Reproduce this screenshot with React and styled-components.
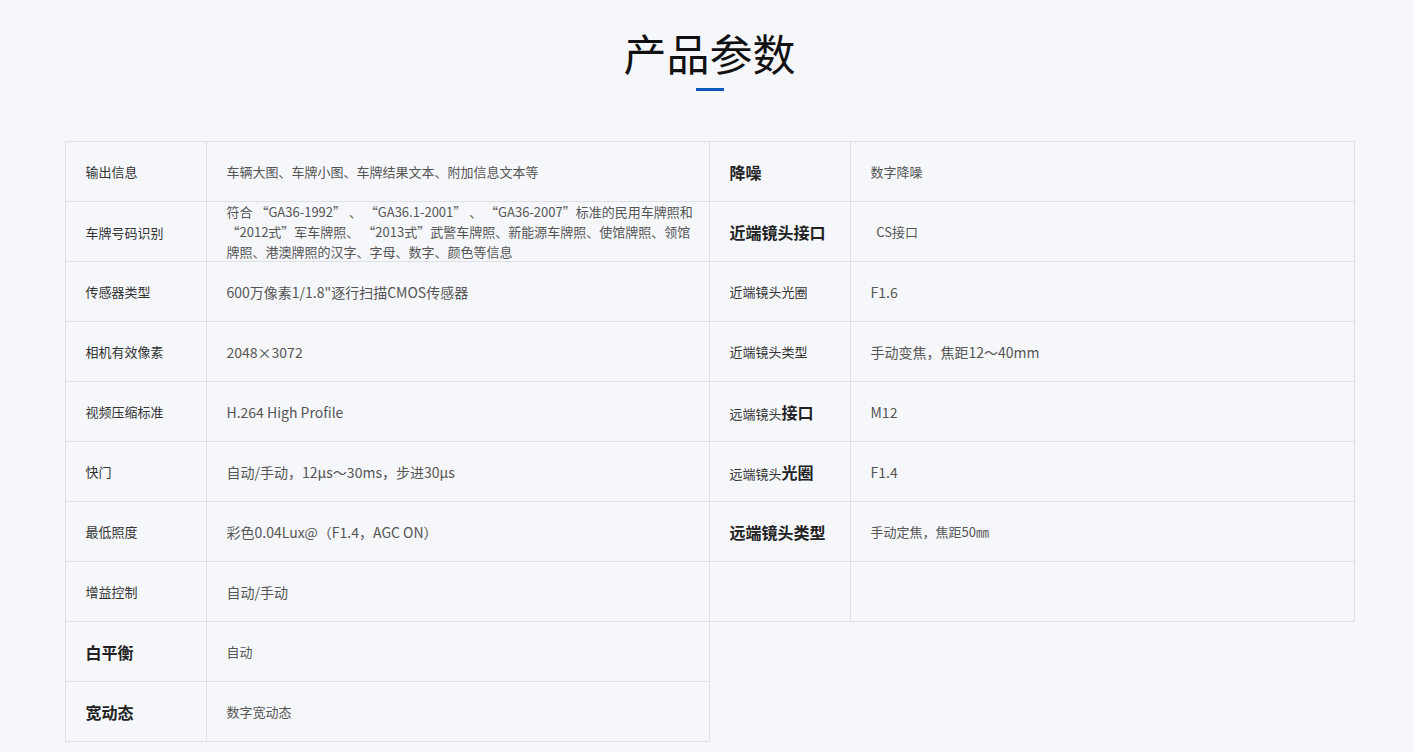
import React from "react";
import styled, { createGlobalStyle } from "styled-components";

const G = createGlobalStyle`
  body { margin:0; background:#f5f7fb; font-family:"Noto Sans CJK SC","Noto Sans",sans-serif; }
`;
const Page = styled.div`padding-top:23px; display:flex; flex-direction:column; align-items:center;`;
const Title = styled.h1`margin:0; font-size:43px; font-weight:400; color:#111; line-height:58px; margin-left:6px;`;
const Bar = styled.div`width:28px; height:3px; background:#0b56b8; margin-top:7px; margin-left:6px;`;
const Tables = styled.div`display:flex; align-items:flex-start; margin-top:50px; width:1290px; margin-left:6px;`;
const Table = styled.div`width:645px; border:1px solid #dde1e6; border-bottom:none; box-sizing:border-box; ${p => p.$right && "border-left:none;"}`;
const Row = styled.div`display:grid; grid-template-columns:141px 1fr; height:60px; border-bottom:1px solid #dde1e6; box-sizing:border-box;`;
const Label = styled.div`
  display:flex; align-items:center; padding-left:20px; border-right:1px solid #dde1e6;
  font-size:${p => (p.$big ? "16px" : "13px")}; font-weight:${p => (p.$big ? 700 : 400)};
  color:${p => (p.$big ? "#222" : "#333")};
  b{font-size:16px;font-weight:700;color:#222;}
`;
const Value = styled.div`
  display:flex; align-items:center; padding:0 6px 0 20px;
  font-size:${p => p.$size || 14}px; color:#555; line-height:${p => p.$lh || "normal"};
`;

const left = [
  ["输出信息", "车辆大图、车牌小图、车牌结果文本、附加信息文本等", {size:13}],
  ["车牌号码识别", "符合 “GA36-1992” 、 “GA36.1-2001” 、 “GA36-2007”标准的民用车牌照和  “2012式”军车牌照、 “2013式”武警车牌照、新能源车牌照、使馆牌照、领馆牌照、港澳牌照的汉字、字母、数字、颜色等信息", {size:13, lh:"20px"}],
  ["传感器类型", "600万像素1/1.8\"逐行扫描CMOS传感器"],
  ["相机有效像素", "2048×3072"],
  ["视频压缩标准", "H.264 High Profile"],
  ["快门", "自动/手动，12μs～30ms，步进30μs"],
  ["最低照度", "彩色0.04Lux@（F1.4，AGC ON）"],
  ["增益控制", "自动/手动"],
  ["白平衡", "自动", {big:true, size:13}],
  ["宽动态", "数字宽动态", {big:true, size:13}],
];
const right = [
  ["降噪", "数字降噪", {big:true, size:13}],
  ["近端镜头接口", "\u00a0\u00a0CS接口", {big:true, size:13}],
  ["近端镜头光圈", "F1.6"],
  ["近端镜头类型", "手动变焦，焦距12～40mm"],
  [<span>远端镜头<b>接口</b></span>, "M12"],
  [<span>远端镜头<b>光圈</b></span>, "F1.4"],
  ["远端镜头类型", "手动定焦，焦距50㎜", {big:true, size:13}],
  ["", ""],
];

const render = rows => rows.map(([l, v, o = {}], i) => (
  <Row key={i}>
    <Label $big={o.big}>{l}</Label>
    <Value $size={o.size} $lh={o.lh}>{v}</Value>
  </Row>
));

export default function App() {
  return (
    <Page>
      <G />
      <Title>产品参数</Title>
      <Bar />
      <Tables>
        <Table>{render(left)}</Table>
        <Table $right>{render(right)}</Table>
      </Tables>
    </Page>
  );
}
